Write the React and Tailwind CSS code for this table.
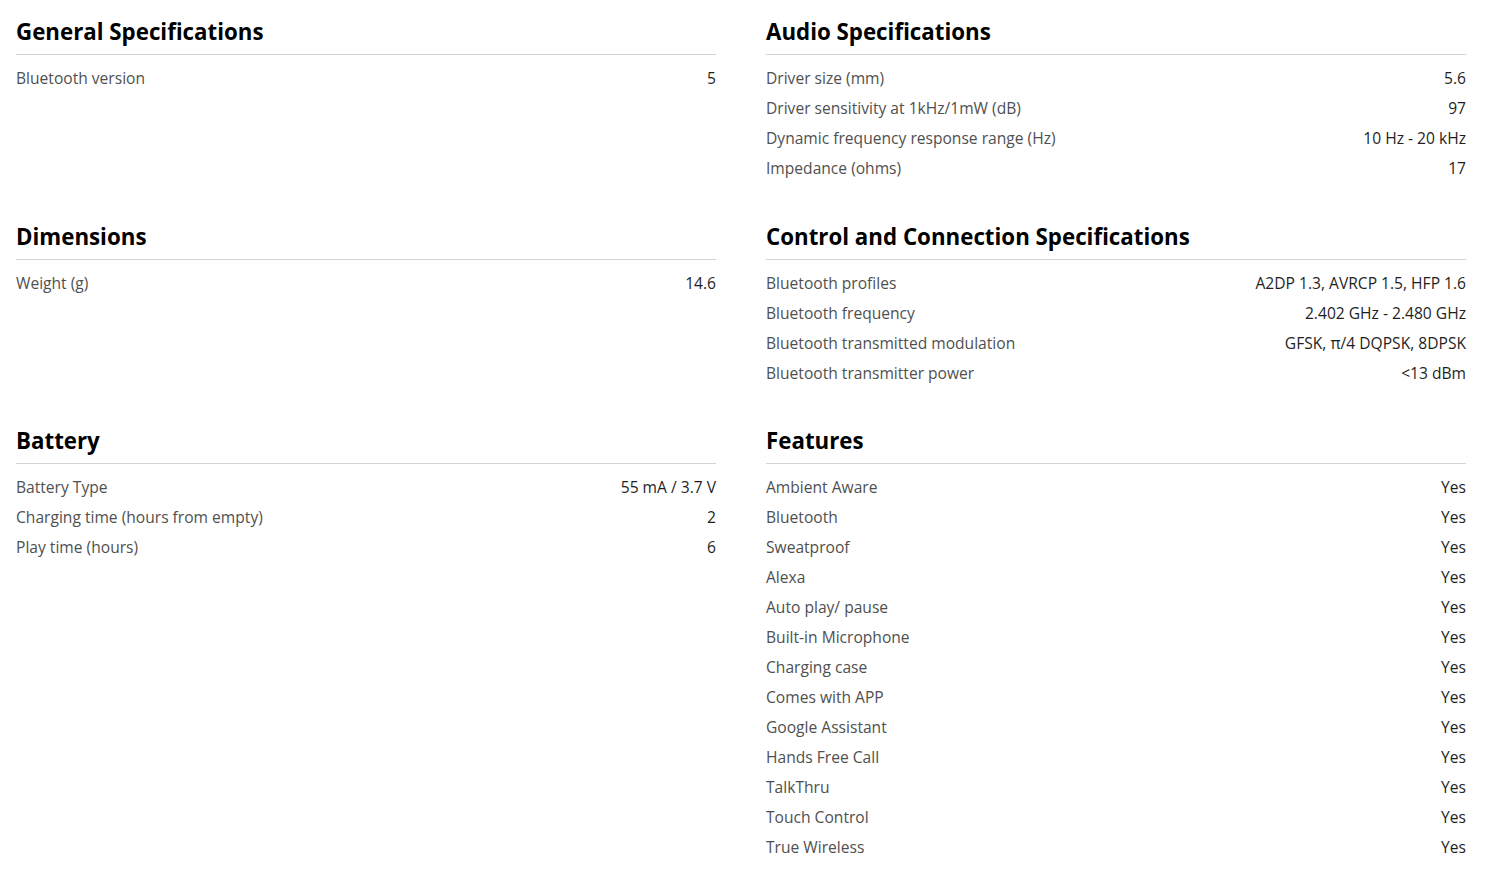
import React from "react";

const sections = [
  [
    {
      title: "General Specifications",
      rows: [["Bluetooth version", "5"]],
    },
    {
      title: "Audio Specifications",
      rows: [
        ["Driver size (mm)", "5.6"],
        ["Driver sensitivity at 1kHz/1mW (dB)", "97"],
        ["Dynamic frequency response range (Hz)", "10 Hz - 20 kHz"],
        ["Impedance (ohms)", "17"],
      ],
    },
  ],
  [
    {
      title: "Dimensions",
      rows: [["Weight (g)", "14.6"]],
    },
    {
      title: "Control and Connection Specifications",
      rows: [
        ["Bluetooth profiles", "A2DP 1.3, AVRCP 1.5, HFP 1.6"],
        ["Bluetooth frequency", "2.402 GHz - 2.480 GHz"],
        ["Bluetooth transmitted modulation", "GFSK, π/4 DQPSK, 8DPSK"],
        ["Bluetooth transmitter power", "<13 dBm"],
      ],
    },
  ],
  [
    {
      title: "Battery",
      rows: [
        ["Battery Type", "55 mA / 3.7 V"],
        ["Charging time (hours from empty)", "2"],
        ["Play time (hours)", "6"],
      ],
    },
    {
      title: "Features",
      rows: [
        "Ambient Aware",
        "Bluetooth",
        "Sweatproof",
        "Alexa",
        "Auto play/ pause",
        "Built-in Microphone",
        "Charging case",
        "Comes with APP",
        "Google Assistant",
        "Hands Free Call",
        "TalkThru",
        "Touch Control",
        "True Wireless",
      ].map((f) => [f, "Yes"]),
    },
  ],
];

function SpecSection({ title, rows }) {
  return (
    <div>
      <h3 className="text-[22.3px] leading-[30px] font-bold text-black pb-[7px] border-b border-[#d4d4d4]">
        {title}
      </h3>
      <ul className="pt-[9px]">
        {rows.map(([label, value]) => (
          <li key={label} className="flex justify-between items-center h-[30px] text-[15.6px]">
            <span className="text-[#505050]">{label}</span>
            <span className="text-[#1f1f1f]">{value}</span>
          </li>
        ))}
      </ul>
    </div>
  );
}

export default function App() {
  return (
    <div
      className="bg-white w-[1497px] min-h-[881px] pl-4 pt-[17px]"
      style={{ fontFamily: '"Open Sans", "Noto Sans", sans-serif' }}
    >
      <div className="w-[1450px] grid grid-cols-2 gap-x-[50px] gap-y-[37.5px]">
        {sections.flat().map((s) => (
          <SpecSection key={s.title} {...s} />
        ))}
      </div>
    </div>
  );
}
